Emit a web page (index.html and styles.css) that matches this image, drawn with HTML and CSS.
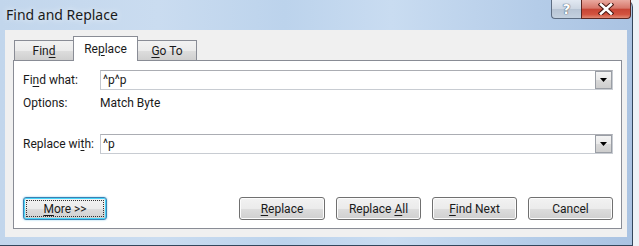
FILE: index.html
```html
<!DOCTYPE html>
<html lang="en">
<head>
    <meta charset="UTF-8">
    <meta name="viewport" content="width=device-width, initial-scale=1.0">
    <title>Find and Replace</title>
    <link rel="stylesheet" href="styles.css">
</head>
<body>
    <div class="window">
        <div class="titlebar">
            <span class="title">Find and Replace</span>
            <div class="caption">
                <span class="cap-btn help">?</span>
                <span class="cap-btn close">
                    <svg width="16" height="12" viewBox="0 0 16 12">
                        <path d="M3 1.5 L13 10.5 M13 1.5 L3 10.5" stroke="#4a1812" stroke-width="4.6" stroke-linecap="square"/>
                        <path d="M3 1.5 L13 10.5 M13 1.5 L3 10.5" stroke="#fff" stroke-width="2.6" stroke-linecap="square"/>
                    </svg>
                </span>
            </div>
        </div>
        <div class="client">
            <div class="tabs">
                <div class="tab first">Fin<u>d</u></div>
                <div class="tab active">Re<u>p</u>lace</div>
                <div class="tab"><u>G</u>o To</div>
            </div>
            <div class="panel">
                <div class="field">
                    <label class="label">Fi<u>n</u>d what:</label>
                    <div class="combo">
                        <span class="value">^p^p</span>
                        <span class="drop"><svg width="7" height="4" viewBox="0 0 7 4"><path d="M0 0 H7 L3.5 4 Z" fill="#000"/></svg></span>
                    </div>
                </div>
                <div class="options">
                    <span class="label">Options:</span>
                    <span>Match Byte</span>
                </div>
                <div class="field replace">
                    <label class="label">Replace wi<u>t</u>h:</label>
                    <div class="combo">
                        <span class="value">^p</span>
                        <span class="drop"><svg width="7" height="4" viewBox="0 0 7 4"><path d="M0 0 H7 L3.5 4 Z" fill="#000"/></svg></span>
                    </div>
                </div>
                <div class="buttons">
                    <button class="btn focused"><span class="focus-rect"><u>M</u>ore &gt;&gt;</span></button>
                    <div class="actions">
                        <button class="btn wide"><u>R</u>eplace</button>
                        <button class="btn">Replace <u>A</u>ll</button>
                        <button class="btn"><u>F</u>ind Next</button>
                        <button class="btn">Cancel</button>
                    </div>
                </div>
            </div>
        </div>
    </div>
</body>
</html>
```

FILE: styles.css
```css
body {
    margin: 0;
    background-color: #eef2f6;
    font-family: Roboto, "Noto Sans", sans-serif;
    font-size: 12px;
    color: #1a1a1a;
}

u {
    text-decoration-thickness: 1px;
    text-underline-offset: 2px;
}

.window {
    width: 632px;
    height: 245px;
    border-right: 1px solid #34475c;
    border-bottom: 1px solid #34475c;
    border-top-right-radius: 7px;
    background: linear-gradient(90deg, #c2d6ec 0%, #cadcf0 25%, #bcd3ec 45%, #c9dcf1 62%, #b4cce8 85%, #aac3e2 100%);
}

.titlebar {
    height: 30px;
    display: flex;
    align-items: flex-start;
}

.title {
    font-family: "Noto Sans", sans-serif;
    font-size: 14px;
    padding: 5px 0 0 6px;
    color: #1a1a1a;
    text-shadow: 0 0 6px rgba(255, 255, 255, 0.9);
}

.caption {
    margin-left: auto;
    margin-right: 1px;
    display: flex;
}

.cap-btn {
    height: 18px;
    display: flex;
    align-items: center;
    justify-content: center;
    border: 1px solid #5d6d82;
    border-top: none;
}

.help {
    width: 29px;
    border-right: none;
    border-bottom-left-radius: 4px;
    background: linear-gradient(#e2e9f2 0%, #ccd6e2 50%, #b7c4d4 51%, #c4d1df 100%);
    color: #fff;
    font-family: "DejaVu Sans", sans-serif;
    font-weight: bold;
    font-size: 14px;
    text-shadow: 0 0 1px #3c4a5c, 0 0 1px #3c4a5c;
}

.close {
    width: 48px;
    border-color: #5b2620;
    border-bottom-right-radius: 4px;
    background: linear-gradient(#e9a99f 0%, #d7776a 45%, #c74535 52%, #d2533f 80%, #e08a75 100%);
}

.client {
    width: 609px;
    height: 192px;
    margin-left: 5px;
    padding: 7px 5px 8px 8px;
    background-color: #f0f0f0;
}

.tabs {
    height: 23px;
    display: flex;
    align-items: flex-end;
}

.tab {
    width: 58px;
    height: 19px;
    display: flex;
    align-items: center;
    justify-content: center;
    border: 1px solid #898c95;
    border-bottom: none;
    background: linear-gradient(#f2f2f2 0%, #ebebeb 50%, #dddddd 51%, #cfcfcf 100%);
}

.tab.first {
    margin-left: 1px;
    border-right: none;
}

.tab.active {
    width: 63px;
    height: 23px;
    margin-bottom: -1px;
    position: relative;
    z-index: 1;
    background: #fff;
    padding-bottom: 1px;
}

.tab.active + .tab {
    border-left: none;
}

.panel {
    height: 150px;
    padding: 9px 8px 8px 9px;
    border: 1px solid #898c95;
    background-color: #fff;
    display: flex;
    flex-direction: column;
}

.label {
    width: 77px;
    flex-shrink: 0;
}

.field {
    height: 20px;
    display: flex;
    align-items: center;
}

.combo {
    flex: 1;
    height: 18px;
    display: flex;
    align-items: center;
    border: 1px solid #abadb3;
    border-color: #abadb3 #c8ccd2 #c8ccd2 #c3c7ce;
}

.value {
    flex: 1;
    padding-left: 2px;
}

.drop {
    width: 15px;
    height: 16px;
    display: flex;
    align-items: center;
    justify-content: center;
    border: 1px solid #9a9ea5;
    background: linear-gradient(#f4f4f4 0%, #e9e9e9 50%, #d9d9d9 51%, #cdcdcd 100%);
}

.options {
    height: 15px;
    margin-top: 5px;
    display: flex;
    align-items: center;
}

.replace {
    margin-top: 24px;
}

.buttons {
    margin-top: auto;
    display: flex;
}

.actions {
    margin-left: auto;
    display: flex;
    gap: 11px;
}

.btn {
    width: 85px;
    height: 23px;
    padding: 0;
    border: 1px solid #707070;
    border-radius: 3px;
    background: linear-gradient(#f2f2f2 0%, #ebebeb 50%, #dddddd 51%, #cfcfcf 100%);
    box-shadow: inset 0 0 0 1px #fcfcfc;
    font-family: inherit;
    font-size: 12px;
    color: #1a1a1a;
}

.btn.wide {
    width: 86px;
}

.btn.focused {
    width: 84px;
    border-color: #3c7fb1;
    box-shadow: inset 0 0 0 1px #48d6fb, 0 0 2px #7ec5e8;
    display: flex;
    padding: 2px;
}

.focus-rect {
    flex: 1;
    display: flex;
    align-items: center;
    justify-content: center;
    border: 1px dotted #333;
}
```
